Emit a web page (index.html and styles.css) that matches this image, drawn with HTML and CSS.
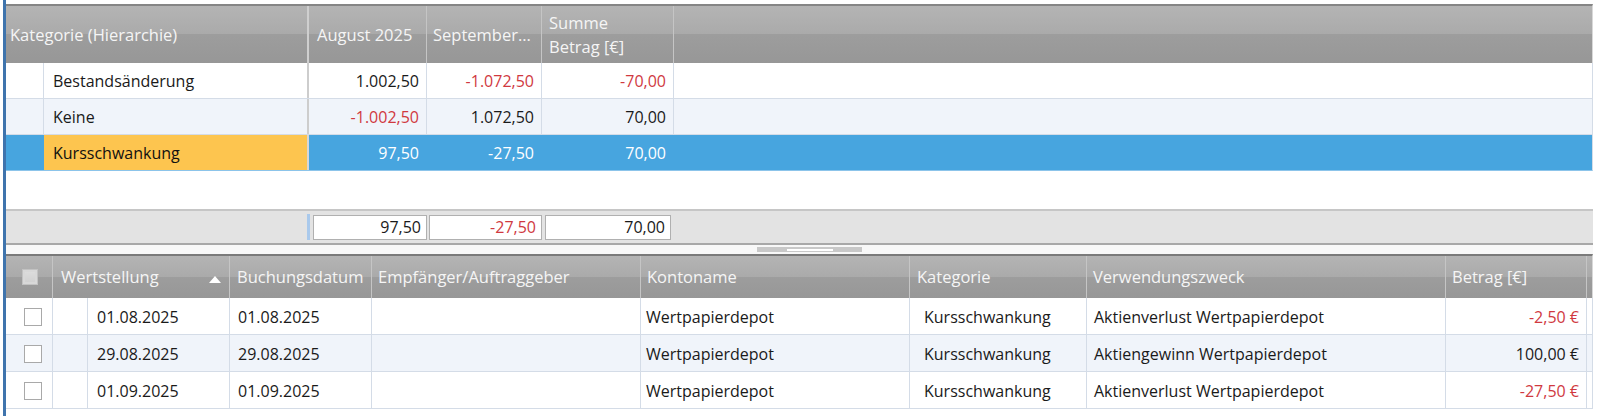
FILE: index.html
```html
<!DOCTYPE html>
<html lang="de">
<head>
<meta charset="utf-8">
<title>Kategorie Pivot</title>
<link rel="stylesheet" href="styles.css">
</head>
<body>
<div class="app">
  <section class="pivot">
    <div class="pv-head">
      <div class="h cat">Kategorie (Hierarchie)</div>
      <div class="h aug">August 2025</div>
      <div class="h sep">September...</div>
      <div class="h sum">Summe<br>Betrag [€]</div>
      <div class="h rest"></div>
    </div>
    <div class="pv-row">
      <div class="c ind"></div>
      <div class="c name">Bestandsänderung</div>
      <div class="c num aug">1.002,50</div>
      <div class="c num sep neg">-1.072,50</div>
      <div class="c num sum neg">-70,00</div>
      <div class="c rest"></div>
    </div>
    <div class="pv-row alt">
      <div class="c ind"></div>
      <div class="c name">Keine</div>
      <div class="c num aug neg">-1.002,50</div>
      <div class="c num sep">1.072,50</div>
      <div class="c num sum">70,00</div>
      <div class="c rest"></div>
    </div>
    <div class="pv-row sel">
      <div class="c ind"></div>
      <div class="c name">Kursschwankung</div>
      <div class="c num aug">97,50</div>
      <div class="c num sep">-27,50</div>
      <div class="c num sum">70,00</div>
      <div class="c rest"></div>
    </div>
    <div class="pv-empty"></div>
    <div class="pv-foot">
      <span class="marker"></span>
      <div class="tot t1">97,50</div>
      <div class="tot t2 neg">-27,50</div>
      <div class="tot t3">70,00</div>
    </div>
  </section>

  <div class="splitter"><span class="grip"><span class="grip-line"></span></span></div>

  <section class="list">
    <div class="ls-head">
      <div class="h chk"><span class="hbox"></span></div>
      <div class="h wert"><span>Wertstellung</span><span class="arrow"></span></div>
      <div class="h buch">Buchungsdatum</div>
      <div class="h emp">Empfänger/Auftraggeber</div>
      <div class="h konto">Kontoname</div>
      <div class="h kat">Kategorie</div>
      <div class="h verw">Verwendungszweck</div>
      <div class="h betr">Betrag [€]</div>
      <div class="h extra"></div>
    </div>
    <div class="ls-row">
      <div class="c chk"><span class="box"></span></div>
      <div class="c ind"></div>
      <div class="c wert">01.08.2025</div>
      <div class="c buch">01.08.2025</div>
      <div class="c emp"></div>
      <div class="c konto">Wertpapierdepot</div>
      <div class="c kat">Kursschwankung</div>
      <div class="c verw">Aktienverlust Wertpapierdepot</div>
      <div class="c betr neg">-2,50 €</div>
      <div class="c extra"></div>
    </div>
    <div class="ls-row alt">
      <div class="c chk"><span class="box"></span></div>
      <div class="c ind"></div>
      <div class="c wert">29.08.2025</div>
      <div class="c buch">29.08.2025</div>
      <div class="c emp"></div>
      <div class="c konto">Wertpapierdepot</div>
      <div class="c kat">Kursschwankung</div>
      <div class="c verw">Aktiengewinn Wertpapierdepot</div>
      <div class="c betr">100,00 €</div>
      <div class="c extra"></div>
    </div>
    <div class="ls-row">
      <div class="c chk"><span class="box"></span></div>
      <div class="c ind"></div>
      <div class="c wert">01.09.2025</div>
      <div class="c buch">01.09.2025</div>
      <div class="c emp"></div>
      <div class="c konto">Wertpapierdepot</div>
      <div class="c kat">Kursschwankung</div>
      <div class="c verw">Aktienverlust Wertpapierdepot</div>
      <div class="c betr neg">-27,50 €</div>
      <div class="c extra"></div>
    </div>
  </section>
</div>
</body>
</html>
```

FILE: styles.css
```css
* { box-sizing: border-box; }
html, body { margin: 0; padding: 0; background: #ffffff; }
body {
  font-family: "Open Sans", "Noto Sans", sans-serif;
  font-size: 16px;
  color: #1a1a1a;
  width: 1604px;
  height: 416px;
  overflow: hidden;
}
.app {
  margin-left: 3px;
  width: 1590px;
  border-left: 3px solid #3f74ad;
  padding-top: 4px;
  height: 416px;
}

/* header common */
.h {
  color: #f5f5f5;
  font-size: 16.5px;
  display: flex;
  align-items: center;
  border-right: 1px solid #c5c5c5;
  line-height: 24px;
  white-space: nowrap;
  overflow: hidden;
}
.pv-head, .ls-head {
  display: flex;
  background: linear-gradient(to bottom, #b4b4b4 0%, #aaaaaa 50%, #9d9d9d 50%, #979797 100%);
  border-right: 1px solid #d8d8d8;
}

/* pivot */
.pv-head {
  height: 59px;
  border-top: 2px solid #858585;
}
.pv-head .cat { width: 303px; padding-left: 4px; border-right: 2px solid #cfcfcf; }
.pv-head .aug { width: 118px; padding-left: 8px; }
.pv-head .sep { width: 115px; padding-left: 6px; }
.pv-head .sum { width: 132px; padding-left: 7px; }
.pv-head .rest { flex: 1; border-right: none; }

.pv-row {
  display: flex;
  height: 36px;
  border-bottom: 1px solid #d4dce7;
  background: #ffffff;
  border-right: 1px solid #d4dce7;
}
.pv-row.alt { background: #f0f4fa; }
.c {
  display: flex;
  align-items: center;
  white-space: nowrap;
  overflow: hidden;
  border-right: 1px solid #d4dce7;
  padding-top: 1px;
}
.pv-row .ind { width: 38px; }
.pv-row .name { width: 265px; padding-left: 9px; border-right: 2px solid #cdcdcd; }
.pv-row .aug { width: 118px; }
.pv-row .sep { width: 115px; }
.pv-row .sum { width: 132px; }
.pv-row .rest { flex: 1; border-right: none; }
.num { justify-content: flex-end; padding-right: 7px; }
.neg { color: #d0393f; }

.pv-row.sel { background: #47a5df; border-bottom-color: #8cc4ea; }
.pv-row.sel .c { border-right-color: #47a5df; color: #ffffff; }
.pv-row.sel .name { background: #fdc54f; color: #111111; border-right-color: #d7d7d7; }

.pv-empty { height: 38px; }

.pv-foot {
  display: flex;
  align-items: center;
  height: 36px;
  background: #e3e3e3;
  border-top: 2px solid #c6c6c6;
  border-bottom: 2px solid #a8a8a8;
  padding-left: 301px;
}
.marker {
  width: 3px;
  height: 26px;
  background: #a9c9ec;
  margin-right: 3px;
}
.tot {
  height: 25px;
  background: #ffffff;
  border: 1px solid #b0b0b0;
  display: flex;
  align-items: center;
  justify-content: flex-end;
  padding-right: 5px;
}
.tot.t1 { width: 114px; margin-right: 2px; }
.tot.t2 { width: 113px; margin-right: 3px; }
.tot.t3 { width: 126px; }

/* splitter */
.splitter {
  height: 9px;
  background: #f8f8f8;
  display: flex;
  align-items: center;
  padding-left: 751px;
}
.grip {
  width: 105px;
  height: 5px;
  background: #c8c8c8;
  display: flex;
  align-items: center;
  justify-content: center;
}
.grip-line { width: 46px; height: 2px; background: #ffffff; }

/* list */
.ls-head {
  height: 44px;
  border-top: 2px solid #7a7a7a;
}
.ls-head .chk { width: 47px; justify-content: center; padding-left: 1px; }
.ls-head .wert { width: 177px; padding: 0 8px; justify-content: space-between; }
.ls-head .buch { width: 142px; padding-left: 7px; }
.ls-head .emp { width: 269px; padding-left: 6px; }
.ls-head .konto { width: 269px; padding-left: 6px; }
.ls-head .kat { width: 177px; padding-left: 7px; }
.ls-head .verw { width: 359px; padding-left: 6px; }
.ls-head .betr { width: 141px; padding-left: 6px; }
.ls-head .extra { flex: 1; border-right: none; }

.hbox {
  width: 16px;
  height: 16px;
  border: 1px solid #c2c2c2;
  background: linear-gradient(to bottom, #dedede, #cfcfcf);
  box-shadow: inset 0 0 0 2px #d8d8d8;
}
.arrow {
  width: 0;
  height: 0;
  border-left: 6px solid transparent;
  border-right: 6px solid transparent;
  border-bottom: 7px solid #ffffff;
  margin-top: 4px;
}

.ls-row {
  display: flex;
  height: 37px;
  border-bottom: 1px solid #d4dce7;
  background: #ffffff;
  border-right: 1px solid #d4dce7;
}
.ls-row.alt { background: #f0f4fa; }
.ls-row .chk { width: 47px; justify-content: flex-start; padding-left: 18px; }
.ls-row .ind { width: 35px; }
.ls-row .wert { width: 142px; padding-left: 9px; }
.ls-row .buch { width: 142px; padding-left: 8px; }
.ls-row .emp { width: 269px; }
.ls-row .konto { width: 269px; padding-left: 5px; }
.ls-row .kat { width: 177px; padding-left: 14px; }
.ls-row .verw { width: 359px; padding-left: 7px; }
.ls-row .betr { width: 141px; justify-content: flex-end; padding-right: 7px; }
.ls-row .extra { flex: 1; border-right: none; }
.box {
  width: 18px;
  height: 18px;
  border: 1px solid #a9a9a9;
  background: #ffffff;
}
```
